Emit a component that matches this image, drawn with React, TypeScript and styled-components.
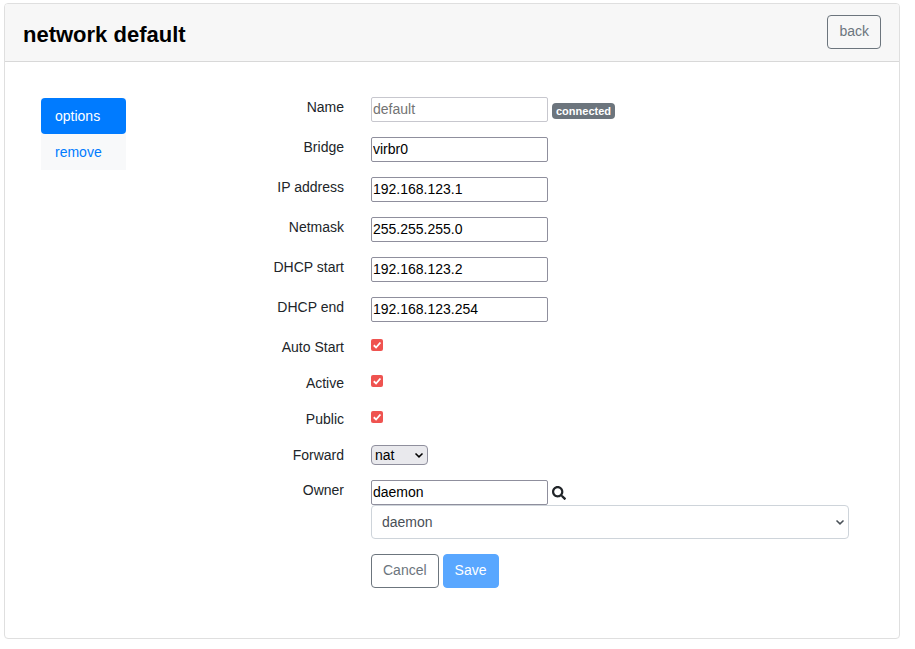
import React, { useState } from "react";
import styled, { createGlobalStyle } from "styled-components";

const svg = (body: string, box: string) =>
  `url("data:image/svg+xml,${encodeURIComponent(
    `<svg xmlns='http://www.w3.org/2000/svg' viewBox='${box}'>${body}</svg>`
  )}")`;

const chevron = (color: string) =>
  svg(
    `<path d='M1.5 1.5 L5 4.900 L8.5 1.5' fill='none' stroke='${color}' stroke-width='1.5'/>`,
    "0 0 10 7"
  );

const tick = svg(
  "<path d='M3 6.8 L5.5 9.2 L10.2 3.8' fill='none' stroke='#fff' stroke-width='2'/>",
  "0 0 13 13"
);

const GlobalStyle = createGlobalStyle`
  *, *::before, *::after { box-sizing: border-box; }
  body {
    margin: 0;
    background: #fff;
    color: #212529;
    font: 14px/22px "Liberation Sans", Arial, sans-serif;
  }
  input, select, button { font: inherit; }
`;

const Page = styled.main`
  padding: 3px 15px 11px 4px;
`;

const Card = styled.section`
  border: 1px solid #dfdfdf;
  border-radius: 4px;
  background: #fff;
`;

const CardHeader = styled.header`
  display: flex;
  justify-content: space-between;
  align-items: flex-start;
  padding: 11px 18px 12px;
  border-bottom: 1px solid #d8d8d8;
  border-radius: 3px 3px 0 0;
  background: #f7f7f7;
`;

const Title = styled.h1`
  margin: 6px 0 0;
  color: #000;
  font-size: 22px;
  line-height: 28px;
`;

const Button = styled.button<{ $primary?: boolean }>`
  height: 34px;
  padding: 0 11px 2px;
  border: 1px solid ${(p) => (p.$primary ? "#59a7ff" : "#6c757d")};
  border-radius: 4px;
  background: ${(p) => (p.$primary ? "#59a7ff" : "transparent")};
  color: ${(p) => (p.$primary ? "#fff" : "#6c757d")};
`;

const CardBody = styled.div`
  display: flex;
  align-items: flex-start;
  padding: 35px 36px;
`;

const Nav = styled.nav`
  display: flex;
  flex-direction: column;
  flex: none;
  width: 85px;
  margin-top: 1px;
  background: #f8f9fa;
`;

const NavLink = styled.a<{ $active?: boolean }>`
  padding: 7px 14px;
  border-radius: 4px;
  background: ${(p) => (p.$active ? "#007bff" : "transparent")};
  color: ${(p) => (p.$active ? "#fff" : "#007bff")};
  text-decoration: none;
`;

const Form = styled.form`
  flex: 1;
  min-width: 0;
  padding-right: 14px;
`;

const Row = styled.div`
  display: grid;
  grid-template-columns: 218px minmax(0, 1fr);
  column-gap: 27px;
  align-items: start;
  margin-bottom: 15px;
`;

const Label = styled.label`
  line-height: 20px;
  text-align: right;
`;

const Field = styled.div`
  display: flex;
  flex-wrap: wrap;
  align-items: center;
  column-gap: 4px;
  grid-column: 2;
`;

const TextInput = styled.input`
  width: 177px;
  height: 25px;
  padding: 0 1px 2px;
  border: 1px solid #8f8f9d;
  border-radius: 2px;
  background: #fff;
  color: #000;

  &:disabled {
    border-color: #c7c7ce;
    color: #737373;
  }
`;

const Badge = styled.span`
  margin-top: 3px;
  padding: 0 4px;
  border-radius: 4px;
  background: #6c757d;
  color: #fff;
  font-size: 11px;
  font-weight: 700;
  line-height: 16px;
`;

const Checkbox = styled.input`
  appearance: none;
  width: 12px;
  height: 12px;
  margin: 2px 0 7px;
  border: 1px solid #8f8f9d;
  border-radius: 2px;

  &:checked {
    border: 0;
    background: #ef5350 ${tick} center / 12px 12px no-repeat;
  }
`;

const SmallSelect = styled.select`
  appearance: none;
  width: 57px;
  height: 20px;
  padding: 0 3px;
  border: 1px solid #8f8f9d;
  border-radius: 4px;
  background: #e9e9ed ${chevron("#000")} right 3px center / 10px 7px no-repeat;
  color: #000;
  line-height: 18px;
`;

const WideSelect = styled.select`
  appearance: none;
  width: 100%;
  height: 34px;
  padding: 0 10px;
  border: 1px solid #ced4da;
  border-radius: 4px;
  background: #fff ${chevron("#495057")} right 3px center / 10px 7px no-repeat;
  color: #495057;
`;

const SearchIcon = styled.svg`
  width: 14px;
  height: 14px;
  fill: #212529;
`;

const textFields = [
  { id: "bridge", label: "Bridge", value: "virbr0" },
  { id: "ip", label: "IP address", value: "192.168.123.1" },
  { id: "netmask", label: "Netmask", value: "255.255.255.0" },
  { id: "dhcp-start", label: "DHCP start", value: "192.168.123.2" },
  { id: "dhcp-end", label: "DHCP end", value: "192.168.123.254" },
];

const flags = [
  { id: "autostart", label: "Auto Start" },
  { id: "active", label: "Active" },
  { id: "public", label: "Public" },
];

export default function App() {
  const [owner, setOwner] = useState("daemon");

  return (
    <>
      <GlobalStyle />
      <Page>
        <Card>
          <CardHeader>
            <Title>network default</Title>
            <Button type="button">back</Button>
          </CardHeader>
          <CardBody>
            <Nav>
              <NavLink href="#options" $active>options</NavLink>
              <NavLink href="#remove">remove</NavLink>
            </Nav>
            <Form onSubmit={(e) => e.preventDefault()}>
              <Row>
                <Label htmlFor="name">Name</Label>
                <Field>
                  <TextInput id="name" defaultValue="default" disabled />
                  <Badge>connected</Badge>
                </Field>
              </Row>
              {textFields.map((f) => (
                <Row key={f.id}>
                  <Label htmlFor={f.id}>{f.label}</Label>
                  <Field>
                    <TextInput id={f.id} defaultValue={f.value} />
                  </Field>
                </Row>
              ))}
              {flags.map((f) => (
                <Row key={f.id}>
                  <Label htmlFor={f.id}>{f.label}</Label>
                  <Field>
                    <Checkbox id={f.id} type="checkbox" defaultChecked />
                  </Field>
                </Row>
              ))}
              <Row>
                <Label htmlFor="forward">Forward</Label>
                <Field>
                  <SmallSelect id="forward" defaultValue="nat">
                    <option>nat</option>
                    <option>route</option>
                  </SmallSelect>
                </Field>
              </Row>
              <Row>
                <Label htmlFor="owner">Owner</Label>
                <Field>
                  <TextInput
                    id="owner"
                    value={owner}
                    onChange={(e) => setOwner(e.target.value)}
                  />
                  <SearchIcon viewBox="0 0 512 512" aria-hidden="true">
                    <path d="M505 442.7L405.3 343c-4.500-4.500-10.600-7-17-7H372c27.600-35.300 44-79.700 44-128C416 93.100 322.900 0 208 0S0 93.100 0 208s93.100 208 208 208c48.300 0 92.700-16.400 128-44v16.300c0 6.400 2.500 12.500 7 17l99.700 99.700c9.400 9.400 24.600 9.400 33.900 0l28.300-28.300c9.400-9.400 9.400-24.600.1-34zM208 336c-70.700 0-128-57.200-128-128 0-70.700 57.200-128 128-128 70.700 0 128 57.200 128 128 0 70.700-57.200 128-128 128z" />
                  </SearchIcon>
                  <WideSelect
                    aria-label="Owner matches"
                    value="daemon"
                    onChange={(e) => setOwner(e.target.value)}
                  >
                    <option>daemon</option>
                  </WideSelect>
                </Field>
              </Row>
              <Row>
                <Field>
                  <Button type="button">Cancel</Button>
                  <Button type="submit" $primary>Save</Button>
                </Field>
              </Row>
            </Form>
          </CardBody>
        </Card>
      </Page>
    </>
  );
}
